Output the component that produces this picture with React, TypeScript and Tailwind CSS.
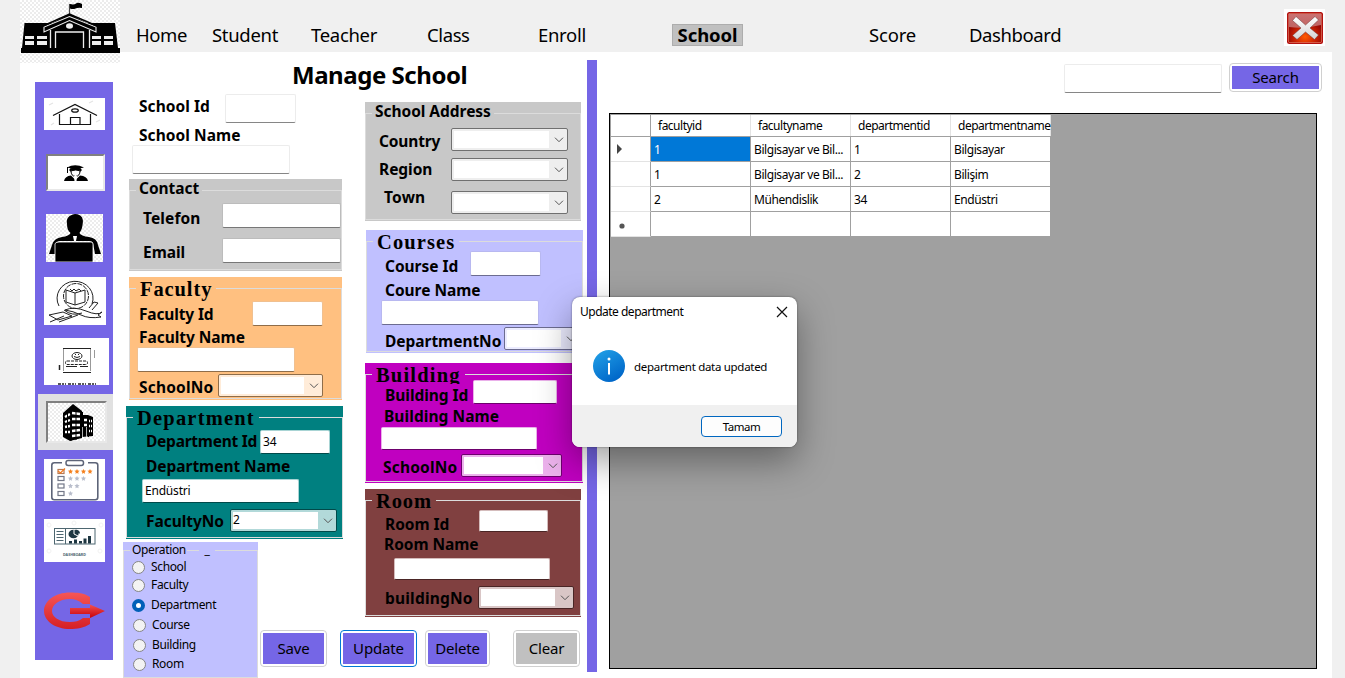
import React from "react";

type BoxProps = { className?: string; children?: React.ReactNode };

const Label = ({ className = "", children }: BoxProps) => (
  <div className={`h-[22px] shrink-0 whitespace-nowrap text-[15.5px] font-bold leading-[22px] tracking-[-0.04px] ${className}`}>{children}</div>
);

const Field = ({ className = "", children }: BoxProps) => (
  <div className={`flex shrink-0 items-center rounded-[2px] border bg-white pl-[2px] text-[12px] tracking-[-0.2px] ${className}`}>
    {children}
  </div>
);

const Combo = ({ className = "", children }: BoxProps) => (
  <div className={`flex h-[23px] shrink-0 rounded-[2px] border py-[2px] pl-[2px] ${className}`}>
    <div className="flex-1 bg-white text-[12px] leading-[16px]">{children}</div>
    <div className="flex w-[18px] items-center justify-center pt-px pl-px">
      <svg width="10" height="6" viewBox="0 0 10 6" fill="none" stroke="#555" strokeWidth="1">
        <path d="M1 .7 5 4.7 9 .7" />
      </svg>
    </div>
  </div>
);

const Group = ({ title, legend, className, children }: { title: string; legend: string; className: string; children: React.ReactNode }) => (
  <section className={`pb-px ${className}`}>
    <fieldset className="h-full border border-[#dcdcdc]">
      <legend className={`ml-[6px] h-[23px] whitespace-nowrap ${legend}`}>{title}</legend>
      {children}
    </fieldset>
  </section>
);

const serif = "font-['Century_Schoolbook','Liberation_Serif',serif] text-[20.5px] font-bold leading-[25px]";
const plain = "px-[3px] text-[15.5px] font-bold leading-[19px] tracking-[-0.04px]";

const PushButton = ({ className = "", face = "bg-[#7566e6]", children }: BoxProps & { face?: string }) => (
  <button className={`flex shrink-0 rounded-[4px] border bg-white p-[2px] tracking-[-0.15px] ${className}`}>
    <span className={`flex h-full w-full items-center justify-center whitespace-nowrap ${face}`}>{children}</span>
  </button>
);

const checker =
  "bg-[repeating-conic-gradient(#ececec_0_25%,#ffffff_0_50%)] bg-[length:4px_4px]";

const SchoolLogo = () => (
  <svg width="100" height="63" viewBox="0 0 100 63">
    <path d="M4.500 23H95L98 48H100V53H1V48H2Z" fill="#000" />
    <path d="M49.500 4V16" stroke="#444" strokeWidth="1.200" />
    <path d="M50 4Q54 5 56 3.500T62 4V8Q58 7.500 55.500 8.500T50 8.500Z" fill="#000" />
    <path d="M49.500 14 75 27V31L71 32V48H28V32L24 31V27Z" fill="#000" />
    <path d="M24 32V27L49.500 16.500 76 27V32L49.500 20.500Z" fill="#000" stroke="#eee" strokeWidth="1.100" />
    <path d="M23 26 49.500 14 77 26" fill="none" stroke="#000" strokeWidth="1.500" />
    <ellipse cx="49.500" cy="26" rx="3.500" ry="2.700" fill="#eee" />
    <path d="M30.500 30V48M69.500 30V48M35.500 48V32H63.500V48" fill="none" stroke="#eee" strokeWidth="1.300" />
    <path d="M5 36h9v3H5zM17 36h10v3H17zM5 41h9v4H5zM17 41h10v4H17zM72 36h9v3h-9zM84 36h9v3h-9zM72 41h9v4h-9zM84 41h9v4h-9z" fill="#eee" />
  </svg>
);

const HouseIcon = () => (
  <svg width="61" height="32" viewBox="0 0 61 32" fill="none" stroke="#111" strokeWidth="1.200">
    <path d="M9 17.500 31 6.500 53 17.500M15.500 16V26.500H46.500V16M26.500 26V19.500H36V26" />
    <ellipse cx="31" cy="12.500" rx="3.300" ry="1.700" />
    <path d="M5 7l4-2M45 5l4-2M7 27l3-2M52 24l4-2" stroke="#e4e4e4" />
  </svg>
);

const StudentIcon = () => (
  <svg width="55" height="33" viewBox="0 0 55 33">
    <path d="M19 11.500Q27 7 36 11.500Q27 14 19 11.500Z" fill="#000" />
    <path d="M19.500 11V17M22 13Q28 10.500 33 13V15Q28 13 22 15Z" stroke="#000" strokeWidth="1" />
    <path d="M23 15Q23 20 27.500 20.500Q32 20 32 15" fill="none" stroke="#000" />
    <path d="M16 25Q17 20 23 19.500L27.500 24 32 19.500Q39 20 40 25Z" fill="#000" />
    <path d="M26 20h3l-.5 5h-2z" fill="#fff" />
  </svg>
);

const TeacherIcon = () => (
  <svg width="57" height="48" viewBox="0 0 57 48">
    <path d="M29 0C36 0 38 5 36.500 11C36 16 34 18 33.500 19Q35 22 43 23Q51 24 52 31L55 40H49L47 29Q46 27 43 27H14Q11 27 10 30L9 40H3L6 31Q8 24 16 23Q23 22 24.500 19C22 17 21 14 21 10C20 4 23 1 29 0Z" fill="#000" />
    <path d="M13 28H45Q47 28 47 30V48H9V30Q9 28 13 28Z" fill="#000" stroke="#fff" strokeWidth=".8" />
    <path d="M27 22h4l-1 5h-2z" fill="#fff" />
  </svg>
);

const CourseIcon = () => (
  <svg width="62" height="48" viewBox="0 0 62 48" fill="none" stroke="#222" strokeWidth="1">
    <path d="M15 29A18 17 0 1 1 48 27M20 33A18 17 0 0 0 38 36" />
    <circle cx="32" cy="19" r="12.500" strokeDasharray="5 1" />
    <path d="M22 13 31 16 41 13V25L31 28 22 25ZM31 16V28M26 12l2 2 2-2 2 2 3-2 2 2" />
    <path d="M21 33Q30 29 42 34T58 35L54 38 57 40Q45 42 37 38T21 33ZM5 38 19 35 28 39 14 43ZM6 45 20 39M15 45 34 38M45 31 50 25 54 26 48 33" />
  </svg>
);

const CertificateIcon = () => (
  <svg width="65" height="47" viewBox="0 0 65 47" fill="none" stroke="#222" strokeWidth="1">
    <path d="M19.500 11V33M46.500 11V33" stroke="#999" />
    <path d="M19 10.500H47M19 34.500H47M22 28.500H33M36 28.500H44" />
    <rect x="21.500" y="23" width="22" height="3.500" rx="1.500" strokeDasharray="3 1" />
    <ellipse cx="33" cy="18" rx="5" ry="3.500" />
    <path d="M30 18.500q3 2 6 0M31 16.500h1M34 16.500h1" />
    <path d="M50.500 12V20" stroke="#999" />
    <path d="M15.500 27V32" strokeWidth="1.500" />
    <path d="M14 46H52" strokeDasharray="3 1 2 1 1 2" strokeWidth="1.500" />
  </svg>
);

const BuildingIcon = () => (
  <svg width="59" height="39" viewBox="0 0 59 39">
    <path d="M15 10 25 1 34 8V35L22 38 15 34Z" fill="#000" />
    <path d="M34 12H40L45 14V33L34 34Z" fill="#000" />
    <path d="M17 14 22 11M17 19 22 17M17 24 22 23M17 29 22 29M24 10 32 11M24 16H32M24 22H32M24 28 32 27M24 33 32 32M36 17H39M36 22H39M41 18H44M41 23H44M41 28H44" stroke="#fff" strokeWidth="2.400" />
    <path d="M23 5V38M28 5V37M19.500 9V36M34.500 9V34M40.500 13V34M42.500 15V33" stroke="#000" strokeWidth="1" />
    <path d="M34.500 24V34M38.500 24V34" stroke="#ddd" strokeWidth=".8" />
  </svg>
);

const starPoints = "0,-2.6 .8,-.9 2.600,-.7 1.200,.6 1.600,2.300 0,1.400 -1.600,2.300 -1.200,.6 -2.600,-.7 -.8,-.9";
const ClipboardIcon = () => (
  <svg width="61" height="42" viewBox="0 0 61 42" fill="none">
    <rect x="7.800" y="3.800" width="46" height="37" rx="2.500" stroke="#5d6478" strokeWidth="1.600" />
    <path d="M18 4H44" stroke="#fff" strokeWidth="3" />
    <rect x="22" y="1.500" width="17.500" height="5" rx="2.200" fill="#fff" stroke="#5d6478" strokeWidth="1.500" />
    {[12.5, 19.5, 27, 34.5].map((y, i) => (
      <g key={y}>
        <rect x="14" y={y - 2} width="6" height="4" stroke={i === 0 ? "#b77952" : "#737888"} strokeWidth="1.200" />
        {Array.from({ length: 4 - i }, (_, j) => (
          <polygon key={j} points={starPoints} fill={i === 0 ? "#f58220" : "#b8bdcb"} transform={`translate(${26.500 + j * 6.500} ${y})`} />
        ))}
      </g>
    ))}
    <path d="M14 12 16.500 14 21 9.500" stroke="#f07820" strokeWidth="1.300" />
  </svg>
);

const DashboardIcon = () => (
  <svg width="61" height="43" viewBox="0 0 61 43" fill="none">
    <rect x="10.500" y="9.500" width="40.500" height="15.500" stroke="#4d6670" />
    <path d="M21.500 9.500V25M12.500 12.500h7M12.500 15.500h7M12.500 18.500h7M12.500 21.500h7" stroke="#4d6670" />
    <ellipse cx="29.500" cy="15" rx="5" ry="4.300" fill="#1d3641" />
    <path d="M30 15V10.500M30 15l4 2" stroke="#fff" />
    <path d="M31.500 10.500Q36 11 36 14.500H31.500Z" fill="#1d3641" />
    <path d="M25 22h3v2.500h-3zM30 20.500h3v4h-3zM35 22h3v2.500h-3zM39.500 19.500h3v5h-3zM44 17h3v7.500h-3z" fill="#1d3641" />
    <text x="19" y="37.300" fontSize="3" fontWeight="700" textLength="23" lengthAdjust="spacingAndGlyphs" fill="#4d6670">DASHBOARD</text>
    <g stroke="#f2f2f2">
      <circle cx="5" cy="6" r="2" /><circle cx="30" cy="4" r="2" /><circle cx="57" cy="6" r="2" /><circle cx="5" cy="32" r="2" /><circle cx="56" cy="32" r="2" />
    </g>
  </svg>
);

const LogoutIcon = () => (
  <svg width="61" height="38" viewBox="0 0 61 38">
    <defs>
      <linearGradient id="ring" x2="0" y2="1"><stop stopColor="#f65656" /><stop offset="1" stopColor="#d51f24" /></linearGradient>
      <linearGradient id="arrow" x2="0" y2="1"><stop stopColor="#f25151" /><stop offset="1" stopColor="#c70009" /></linearGradient>
    </defs>
    <path d="M46 5C40 1 33 .500 26 .500C11 .500 0 9 0 19S11 37 26 37C33 37 40 36 46 32V26H39C35 29 31 30 26 30C15 30 8 25 8 19S15 7 26 7C31 7 35 8.500 39 12H46Z" fill="url(#ring)" />
    <path d="M26 16H46V12.500L61 19 46 26V22H26Z" fill="url(#arrow)" />
  </svg>
);

const CloseIcon = () => (
  <svg width="41" height="37" viewBox="0 0 41 37">
    <defs>
      <radialGradient id="glow" cx=".5" cy=".8" r=".6"><stop stopColor="#ff5a00" /><stop offset=".5" stopColor="#cf2504" /><stop offset="1" stopColor="#8e0404" /></radialGradient>
      <linearGradient id="gloss" x2="0" y2="1"><stop stopColor="#d98e8e" /><stop offset="1" stopColor="#c87a7a" /></linearGradient>
      <linearGradient id="cross" x2="0" y2="1"><stop stopColor="#fff" /><stop offset="1" stopColor="#d4d4d4" /></linearGradient>
    </defs>
    <rect width="41" height="37" fill="#fff" />
    <rect x="3" y="3" width="36" height="32" rx="2.500" fill="#b00a0a" />
    <rect x="4.400" y="4.400" width="33.200" height="29.200" rx="1.500" fill="url(#glow)" stroke="#e8846c" strokeWidth=".7" />
    <path d="M5 5H37V16Q21 20 5 18Z" fill="url(#gloss)" opacity=".8" />
    <path d="M12 7.500 21.500 16 31 7.500 34.500 11 26 19 34.500 26 30.500 30.500 21.500 23 13 30.500 8.500 26.500 17 19 8.500 11.500Z" fill="url(#cross)" stroke="#6b3030" strokeWidth=".5" />
  </svg>
);

const sunken = "border-2 border-b-[#e8e8e8] border-l-[#808080] border-r-[#e8e8e8] border-t-[#808080]";

const Sidebar = () => (
  <aside className="mt-[30px] ml-[15px] flex h-[578px] w-[78px] shrink-0 flex-col items-start bg-[#7566e6]">
    <div className="mt-[16px] ml-[9px] bg-white"><HouseIcon /></div>
    <div className={`mt-[24px] ml-[11px] bg-white ${sunken}`}><StudentIcon /></div>
    <div className={`mt-[23px] ml-[11px] ${checker}`}><TeacherIcon /></div>
    <div className="mt-[15px] ml-[9px] bg-white"><CourseIcon /></div>
    <div className="mt-[13px] ml-[9px] bg-white"><CertificateIcon /></div>
    <div className="mt-[9px] ml-[3px] h-[56px] w-[75px] bg-[#e1e1e1] pt-[7px] pl-[8px]">
      <div className={`h-[42px] w-[61px] bg-clip-padding ${sunken} ${checker}`}><BuildingIcon /></div>
    </div>
    <div className="mt-[9px] ml-[9px] bg-white"><ClipboardIcon /></div>
    <div className="mt-[18px] ml-[9px] bg-white"><DashboardIcon /></div>
    <div className="mt-[30px] ml-[9px]"><LogoutIcon /></div>
  </aside>
);

const Header = () => (
  <header className="flex h-[52px] shrink-0 text-[18.5px] leading-[24px]">
    <div className={`ml-[20px] h-[63px] w-[100px] shrink-0 ${checker}`}><SchoolLogo /></div>
    <nav className="flex pt-[23px] tracking-[-0.4px] whitespace-nowrap">
      <a className="ml-[16px] w-[76px]">Home</a>
      <a className="w-[99px] tracking-[-0.3px]">Student</a>
      <a className="w-[116px] tracking-[-0.3px]">Teacher</a>
      <a className="w-[111px]">Class</a>
      <a className="w-[134px] tracking-[-0.3px]">Enroll</a>
      <a className="mt-[1px] h-[22px] w-[71px] border border-[#adadad] bg-[#c0c0c0] text-center font-bold leading-[20px] tracking-[-0.1px]">School</a>
      <a className="ml-[126px] w-[100px] tracking-[-0.2px]">Score</a>
      <a>Dashboard</a>
    </nav>
    <div className="mt-[9px] mr-[20px] ml-auto"><CloseIcon /></div>
  </header>
);

const grayField = "border-[#bcbcbc] border-b-[#777]";
const radios = [
  { name: "School", row: "h-[16px]", pad: "pl-[8px]" },
  { name: "Faculty", row: "mt-px h-[18px]", pad: "pl-[8px]" },
  { name: "Department", row: "mt-px h-[20px]", pad: "pl-[8px]" },
  { name: "Course", row: "h-[20px]", pad: "pl-[9px]" },
  { name: "Building", row: "h-[20px]", pad: "pl-[9px]" },
  { name: "Room", row: "h-[18px]", pad: "pl-[9px]" },
];

const LeftColumn = () => (
  <div className="w-[242px] shrink-0">
    <div className="flex h-[32px] items-start">
      <Label className="mt-[3px] ml-[16px] w-[86px] tracking-[0.05px]">School Id</Label>
      <Field className="mt-[2px] h-[29px] w-[71px] border-[#ececec] border-b-[#868686]" />
    </div>
    <Label className="ml-[16px] tracking-[0.05px]">School Name</Label>
    <Field className="-mt-px ml-[9px] h-[29px] w-[158px] border-[#ececec] border-b-[#868686]" />

    <Group title="Contact" legend={plain} className="mt-[5px] ml-[6px] h-[92px] w-[213px] bg-[#c8c8c8]">
      <div className="mt-px flex h-[25px] items-start">
        <Label className="mt-[4px] ml-[13px] w-[79px] tracking-[0.1px]">Telefon</Label>
        <Field className={`h-[25px] w-[119px] ${grayField}`} />
      </div>
      <div className="mt-[10px] flex h-[25px] items-start">
        <Label className="mt-[3px] ml-[13px] w-[79px]">Email</Label>
        <Field className={`h-[25px] w-[119px] ${grayField}`} />
      </div>
    </Group>

    <Group title="Faculty" legend={`${serif} px-[4px] tracking-[0.9px]`} className="mt-[6px] ml-[6px] h-[123px] w-[213px] bg-[#ffc080]">
      <div className="mt-px flex h-[25px] items-start">
        <Label className="mt-[2px] ml-[9px] w-[113px] tracking-[-0.15px]">Faculty Id</Label>
        <Field className="h-[25px] w-[71px] border-[#f0c090] border-b-[#8f6d49]" />
      </div>
      <Label className="ml-[9px]">Faculty Name</Label>
      <Field className="-mt-px ml-[7px] h-[25px] w-[158px] border-[#f0c090] border-b-[#8f6d49]" />
      <div className="mt-[2px] flex h-[23px] items-start">
        <Label className="mt-[2px] ml-[9px] w-[79px] tracking-[0.2px]">SchoolNo</Label>
        <Combo className="w-[105px] border-[#8f6d49] bg-[#ffecd9]" />
      </div>
    </Group>

    <Group title="Department" legend={`${serif} px-[4px] tracking-[1.2px]`} className="mt-[6px] ml-[3px] h-[133px] w-[217px] bg-[#008080]">
      <div className="mt-px flex h-[24px] items-start">
        <Label className="ml-[19px] w-[114px] tracking-[-0.25px]">Department Id</Label>
        <Field className="h-[24px] w-[70px] border-[#a8d4d4] border-b-[#004a4a]">34</Field>
      </div>
      <Label className="mt-px ml-[19px] tracking-[-0.2px]">Department Name</Label>
      <Field className="mt-[2px] ml-[15px] h-[24px] w-[157px] border-[#a8d4d4] border-b-[#004a4a]">Endüstri</Field>
      <div className="mt-[6px] flex h-[23px] items-start">
        <Label className="mt-px ml-[19px] w-[84px]">FacultyNo</Label>
        <Combo className="w-[107px] border-[#004a4a] bg-[#b2d9d9]">2</Combo>
      </div>
    </Group>
  </div>
);

const RightColumn = () => (
  <div className="w-[222px] shrink-0">
    <Group title="School Address" legend={plain} className="mt-[10px] h-[119px] w-[216px] bg-[#c8c8c8]">
      <div className="mt-[3px] flex h-[23px] items-start">
        <Label className="mt-[2px] ml-[13px] w-[72px] tracking-[-0.15px]">Country</Label>
        <Combo className="w-[117px] border-[#707070] bg-[#eeeeee]" />
      </div>
      <div className="mt-[7px] flex h-[23px] items-start">
        <Label className="ml-[13px] w-[72px]">Region</Label>
        <Combo className="w-[117px] border-[#707070] bg-[#eeeeee]" />
      </div>
      <div className="mt-[10px] flex h-[23px] items-start">
        <Label className="-mt-[5px] ml-[18px] w-[67px] tracking-[0.2px]">Town</Label>
        <Combo className="w-[117px] border-[#707070] bg-[#eeeeee]" />
      </div>
    </Group>

    <Group title="Courses" legend={`${serif} px-[4px] tracking-[1.1px]`} className="mt-[9px] ml-px h-[123px] w-[217px] bg-[#c0c0ff]">
      <div className="-mt-[2px] flex h-[25px] items-start">
        <Label className="mt-[4px] ml-[18px] w-[85px] tracking-[-0.3px]">Course Id</Label>
        <Field className="h-[25px] w-[71px] border-[#b8b8f0] border-b-[#6c6c90]" />
      </div>
      <Label className="mt-[3px] ml-[18px]">Coure Name</Label>
      <Field className="-mt-px ml-[14px] h-[25px] w-[158px] border-[#b8b8f0] border-b-[#6c6c90]" />
      <div className="mt-[2px] flex h-[23px] items-start">
        <Label className="mt-[3px] ml-[18px] w-[119px] tracking-[-0.1px]">DepartmentNo</Label>
        <Combo className="w-[76px] border-[#6c6c90] bg-[#ececff]" />
      </div>
    </Group>

    <Group title="Building" legend={`${serif} px-[4px] tracking-[1.2px]`} className="mt-[10px] h-[120px] w-[218px] bg-[#c000c0]">
      <div className="-mt-[6px] flex h-[24px] items-start">
        <Label className="mt-[4px] ml-[19px] w-[88px] bg-[#c000c0]">Building Id</Label>
        <Field className="h-[24px] w-[84px] border-[#eab0ea] border-b-[#6d006d]" />
      </div>
      <Label className="mt-px ml-[18px] tracking-[0.06px]">Building Name</Label>
      <Field className="ml-[15px] h-[23px] w-[156px] border-[#eab0ea] border-b-[#6d006d]" />
      <div className="mt-[4px] flex h-[23px] items-start">
        <Label className="mt-[2px] ml-[17px] w-[78px] tracking-[0.2px]">SchoolNo</Label>
        <Combo className="w-[101px] border-[#6d006d] bg-[#ecb2ec]" />
      </div>
    </Group>

    <Group title="Room" legend={`${serif} px-[4px] tracking-[0.9px]`} className="mt-[6px] h-[128px] w-[216px] bg-[#804040]">
      <div className="-mt-[2px] flex h-[22px] items-start">
        <Label className="mt-[3px] ml-[19px] w-[94px]">Room Id</Label>
        <Field className="h-[22px] w-[69px] border-[#d4bcbc] border-b-[#4a2525]" />
      </div>
      <Label className="mt-px ml-[18px]">Room Name</Label>
      <Field className="mt-[3px] ml-[28px] h-[22px] w-[156px] border-[#d4bcbc] border-b-[#4a2525]" />
      <div className="mt-[6px] flex h-[23px] items-start">
        <Label className="mt-px ml-[19px] w-[93px] tracking-[0.2px]">buildingNo</Label>
        <Combo className="w-[96px] border-[#4a2525] bg-[#d9c6c6]" />
      </div>
    </Group>
  </div>
);

const Form = () => (
  <main className="w-[474px] shrink-0 pl-[10px]">
    <h1 className="ml-[169px] h-[40px] pt-[7px] text-[24px] font-bold leading-[32px] tracking-[-0.45px] whitespace-nowrap">Manage School</h1>
    <div className="flex h-[449px] items-start">
      <LeftColumn />
      <RightColumn />
    </div>
    <div className="flex items-start">
      <section className="mt-px h-[136px] w-[135px] shrink-0 bg-[#c0c0ff] text-[12px] tracking-[-0.35px]">
        <fieldset className="h-full border border-[#dcdcdc]">
          <legend className="ml-[6px] flex h-[17px] leading-[15px]">
            <span className="w-[57px] pl-[2px] tracking-[-0.35px]">Operation</span>
            <span className="mt-[8px] h-px w-[12px] bg-[#dcdcdc]" />
            <span className="w-[16px] text-center">_</span>
          </legend>
          {radios.map((r) => (
            <div key={r.name} className={`flex items-center gap-[6px] ${r.row} ${r.pad}`}>
              <span className={`size-[13px] shrink-0 rounded-full ${r.name === "Department" ? "border-4 border-[#005fb8] bg-white" : "border border-[#858585] bg-[#f3f3f3]"}`} />
              <span>{r.name}</span>
            </div>
          ))}
        </fieldset>
      </section>
      <div className="mt-[89px] flex h-[37px] text-[15px]">
        <PushButton className="ml-[2px] w-[67px] border-[#d0d0d0]">Save</PushButton>
        <PushButton className="ml-[13px] w-[77px] border-[#0078d4]">Update</PushButton>
        <PushButton className="ml-[8px] w-[65px] border-[#d0d0d0]">Delete</PushButton>
        <PushButton className="ml-[23px] w-[67px] border-[#d0d0d0]" face="bg-[#c0c0c0]">Clear</PushButton>
      </div>
    </div>
  </main>
);

const rows = [
  ["1", "Bilgisayar ve Bil...", "1", "Bilgisayar"],
  ["1", "Bilgisayar ve Bil...", "2", "Bilişim"],
  ["2", "Mühendislik", "34", "Endüstri"],
  ["", "", "", ""],
];

const DataGrid = () => (
  <div className="mt-[20px] ml-[12px] h-[556px] w-[708px] border border-black bg-[#a0a0a0] pt-px pl-px text-[12px] tracking-[-0.42px]">
    <div className="flex h-[22px] border-b border-[#a0a0a0]">
      <div className="w-[40px] border-r border-[#a0a0a0] bg-white" />
      {["facultyid", "facultyname", "departmentid", "departmentname"].map((h) => (
        <div key={h} className="w-[100px] border-r border-[#e3e3e3] bg-white pl-[7px] leading-[22px] tracking-[-0.5px] whitespace-nowrap">{h}</div>
      ))}
    </div>
    {rows.map((cells, i) => (
      <div key={i} className="flex h-[25px]">
        <div className="flex w-[40px] items-center border-r border-b border-r-[#a0a0a0] border-b-[#e3e3e3] bg-white">
          {i === 0 && <svg className="ml-[6px]" width="6" height="10"><path d="M0 0 5 5 0 10Z" fill="#444" /></svg>}
          {i === 3 && <svg className="mt-[4px] ml-[8px]" width="6" height="6"><circle cx="3" cy="3" r="2.600" fill="#555" /></svg>}
        </div>
        {cells.map((c, j) => (
          <div key={j} className={`w-[100px] border-r border-b border-[#a0a0a0] pl-[3px] leading-[25px] whitespace-nowrap ${i === 0 && j === 0 ? "bg-[#0078d7] text-white" : "bg-white"}`}>{c}</div>
        ))}
      </div>
    ))}
  </div>
);

const Dialog = () => (
  <div className="absolute top-[297px] left-[572px] flex h-[150px] w-[225px] flex-col overflow-hidden rounded-[8px] bg-white text-[12px] tracking-[-0.5px] shadow-[0_14px_36px_rgba(0,0,0,0.38),0_0_2px_rgba(0,0,0,0.5)]">
    <div className="flex h-[30px] items-center justify-between pr-[9px] pl-[8px]">
      <span>Update department</span>
      <svg width="12" height="12" viewBox="0 0 12 12" stroke="#111" strokeWidth="1.200"><path d="M1 1 11 11M11 1 1 11" /></svg>
    </div>
    <div className="flex flex-1 items-center pl-[21px]">
      <svg width="32" height="32" viewBox="0 0 32 32">
        <defs><linearGradient id="info" x2=".6" y2="1"><stop stopColor="#23a3e8" /><stop offset="1" stopColor="#0067c9" /></linearGradient></defs>
        <circle cx="16" cy="16" r="16" fill="url(#info)" />
        <circle cx="16" cy="9" r="1.500" fill="#fff" /><path d="M16 13V24.500" stroke="#fff" strokeWidth="2" />
      </svg>
      <span className="mt-[2px] ml-[9px] text-[11.5px] tracking-[-0.3px]">department data updated</span>
    </div>
    <div className="flex h-[42px] items-center justify-end bg-[#f0f0f0] pr-[15px]">
      <button className="h-[21px] w-[81px] rounded-[4px] border border-[#0067c0] bg-[#fdfdfd] text-[11.5px] leading-[20px] tracking-[-0.5px]">Tamam</button>
    </div>
  </div>
);

export default function App() {
  return (
    <div className="relative flex h-[678px] w-[1345px] flex-col overflow-hidden bg-[#f0f0f0] font-['Segoe_UI','Noto_Sans',sans-serif] text-black">
      <Header />
      <div className="mr-[13px] ml-[20px] flex h-[626px] bg-[linear-gradient(to_right,transparent_100px,#fff_100px),linear-gradient(to_bottom,transparent_11px,#fff_11px)]">
        <Sidebar />
        <Form />
        <div className="mt-[8px] h-[612px] w-[10px] shrink-0 bg-[#7566e6]" />
        <div className="flex-1">
          <div className="flex h-[41px] items-start justify-end pt-[11px] pr-[10px]">
            <Field className="mt-px h-[29px] w-[158px] border-[#ececec] border-b-[#868686]" />
            <PushButton className="ml-[7px] h-[29px] w-[93px] border-[#d0d0d0] text-[15px]">Search</PushButton>
          </div>
          <DataGrid />
        </div>
      </div>
      <Dialog />
    </div>
  );
}
